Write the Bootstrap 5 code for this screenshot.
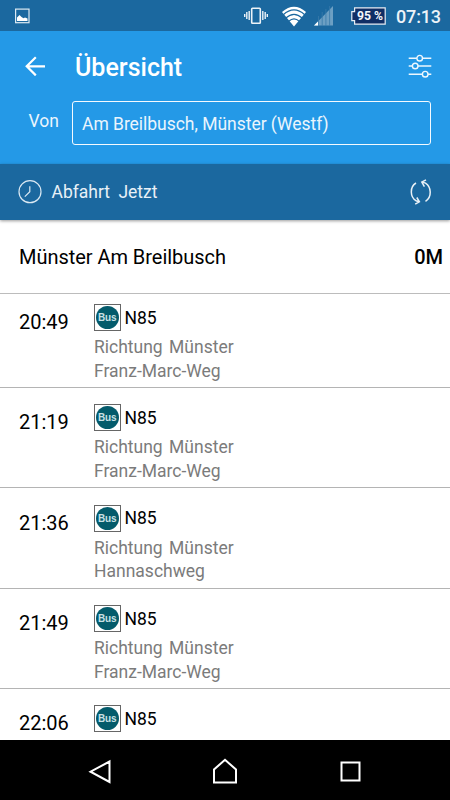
<!DOCTYPE html>
<html lang="de">
<head>
<meta charset="utf-8">
<meta name="viewport" content="width=device-width, initial-scale=1">
<title>Übersicht</title>
<link href="https://cdn.jsdelivr.net/npm/bootstrap@5.3.0/dist/css/bootstrap.min.css" rel="stylesheet">
<style>
body{font-family:Roboto,"Liberation Sans",sans-serif;color:#000;height:800px}
svg{display:block;flex:none}
.status{height:31px;background:#1b689f;padding:0 10px 0 14px}
.clock{font-size:18px;font-weight:500;line-height:31px;color:#edf3f8;width:44px;margin-left:10px;padding-top:1px;letter-spacing:-.15px}
.ic-wifi{margin-left:13px}
.ic-signal{margin-left:7px}
.ic-battery{margin-left:17px}
.appbar{height:133px;background:#2499e7}
.titlebar{height:70px;padding:0 18px 0 25px}
.title{font-size:25px;font-weight:500;line-height:30px;margin:3px 0 0 30px}
.from{padding:0 19px 0 28.5px}
.from-label{width:43.5px;font-size:17.5px;line-height:24px;padding-top:8px;color:#eaf5fd}
.from-field{height:44px;border:1px solid #f4faff;border-radius:3px;font-size:17.5px;line-height:44px;padding-left:9px;color:#eaf5fd;letter-spacing:-.03px}
.timebar{height:56px;background:#1b689f;padding:0 18px;color:#e9f1f7;font-size:17.5px;box-shadow:0 1px 3px rgba(0,0,0,.4);z-index:1}
.when{margin-left:9.5px;padding-top:1px;word-spacing:4px}
.stop{height:74px;font-size:20px;padding:0 7px 0 19px;border-bottom:1px solid #bcbcbc;letter-spacing:-.04px}
.trip{height:100.4px;padding:16.2px 0 0 19px;border-bottom:1px solid #b4b4b4}
.trip:first-child{height:94px;padding-top:10px}
.time{width:75px;font-size:20px;line-height:24px;padding-top:6px}
.line{font-size:17.5px;gap:4px;height:27px}
.line-no{padding-top:1px}
.bus-box{width:26.500px;height:27px;border:1px solid #666}
.bus-disc{width:23px;height:23px;border-radius:50%;background:#045b6b;color:#c9e0e4;font:700 10px/23px "Liberation Sans",sans-serif;text-align:center;white-space:nowrap;letter-spacing:-.1px}
.dest{font-size:17.5px;line-height:23.700px;color:#7b7b7b;padding-top:5px;word-spacing:2px}
.navkeys{height:60px;background:#000}
</style>
<script src="https://cdn.jsdelivr.net/npm/bootstrap@5.3.0/dist/js/bootstrap.bundle.min.js"></script>
</head>
<body class="d-flex flex-column overflow-hidden bg-white">
<div class="status d-flex align-items-center flex-shrink-0">
  <svg width="16" height="16" viewBox="0 0 16 16"><rect x="1.6" y="1.1" width="13.4" height="13.6" fill="none" stroke="#dce9f2" stroke-width="1.2"/><path d="M3 13V9.500L5.500 7l2 2 2 1.200 1.500-.7 2.500 1V13z" fill="#fff"/></svg>
  <svg class="ms-auto" width="24" height="20" viewBox="0 0 24 20" fill="none" stroke="#edf3f8" stroke-width="1.4"><rect x="7.7" y="2.2" width="8.600" height="15" rx=".8" stroke-width="1.600"/><path d="M5.200 5v9M2.800 6v7M.7 8v3M18.800 5v9M21.200 6v7M23.300 8v3"/></svg>
  <svg class="ic-wifi" width="26" height="22" viewBox="0 0 26 22"><path d="M1 7Q13-3.500 25 7L13 21.500z" fill="#fff"/><path d="M2.300 9.700Q13 0 23.700 9.700M4.800 13Q13 5.600 21.200 13M7.700 16.200Q13 11.500 18.300 16.200" fill="none" stroke="#1b689f" stroke-width="1.2"/></svg>
  <svg class="ic-signal" width="20" height="20" viewBox="0 0 20 20"><path d="M0 19.500L19 0V19.500z" fill="#6c9fc3"/><path d="M0 19.500l4-4.100v4.100z" fill="#fff"/><path d="M4.500 10v10M8.200 6v14M11.900 3v17M15.600 0v20" stroke="#397aa9" stroke-width=".8"/></svg>
  <svg class="ic-battery" width="35" height="18" viewBox="0 0 35 18"><path d="M3.600.8h30.600v16.400H3.600v-3.600H.8V4.700h2.800z" fill="#102e65" stroke="#e7eef5" stroke-width="1.200"/><text x="6" y="13" textLength="26" lengthAdjust="spacingAndGlyphs" font-family="Roboto, sans-serif" font-size="12.3" font-weight="700" fill="#f3f7fb">95 %</text></svg>
  <div class="clock">07:13</div>
</div>
<header class="appbar flex-shrink-0 text-white">
  <div class="titlebar d-flex align-items-center">
    <svg width="20" height="20" viewBox="0 0 20 20" fill="none" stroke="#fff" stroke-width="2.2"><path d="M20 10.300H2M10.800 1.200L1.700 10.300l9.100 9.100"/></svg>
    <h1 class="title mb-0">Übersicht</h1>
    <svg class="ms-auto" width="24" height="24" viewBox="0 0 24 24" fill="#2499e7" stroke="#edf7fe" stroke-width="1.4"><path d="M.7 4.200h22.600M.7 12h22.600M.7 20.200h22.600"/><circle cx="11.700" cy="4.200" r="2.800"/><circle cx="7.200" cy="12" r="2.800"/><circle cx="17.200" cy="20.200" r="2.800"/></svg>
  </div>
  <div class="from d-flex">
    <div class="from-label flex-shrink-0">Von</div>
    <div class="from-field flex-grow-1">Am Breilbusch, Münster (Westf)</div>
  </div>
</header>
<div class="timebar d-flex align-items-center flex-shrink-0 position-relative">
  <svg width="24" height="24" viewBox="0 0 24 24" fill="none" stroke="#dbe9f3" stroke-width="1.2"><circle cx="12" cy="11.700" r="11"/><path d="M11.800 6.200v5.500l-5 5"/></svg>
  <span class="when">Abfahrt Jetzt</span>
  <svg class="ms-auto" width="22" height="26" viewBox="0 0 22 26" fill="none" stroke="#e9f1f7" stroke-width="1.500"><path d="M6 4C-.6 8 .1 18 6 21.700l3 1.100M5.200 25.200l4.200-2.400-2.600-4.300M15.500 22.300c6.600-4 6-14.500 0-18.200l-3-1M16 .8l-4.200 2.300L14.400 7.600"/></svg>
</div>
<main class="flex-grow-1 overflow-hidden">
  <div class="stop d-flex align-items-center justify-content-between"><span>Münster Am Breilbusch</span><span class="fw-medium om">0M</span></div>
  <div>
    <div class="trip d-flex"><div class="time">20:49</div><div><div class="line d-flex align-items-center"><div class="bus-box d-flex align-items-center justify-content-center"><span class="bus-disc">Bus</span></div><span class="line-no">N85</span></div><div class="dest">Richtung Münster<br>Franz-Marc-Weg</div></div></div>
    <div class="trip d-flex"><div class="time">21:19</div><div><div class="line d-flex align-items-center"><div class="bus-box d-flex align-items-center justify-content-center"><span class="bus-disc">Bus</span></div><span class="line-no">N85</span></div><div class="dest">Richtung Münster<br>Franz-Marc-Weg</div></div></div>
    <div class="trip d-flex"><div class="time">21:36</div><div><div class="line d-flex align-items-center"><div class="bus-box d-flex align-items-center justify-content-center"><span class="bus-disc">Bus</span></div><span class="line-no">N85</span></div><div class="dest">Richtung Münster<br>Hannaschweg</div></div></div>
    <div class="trip d-flex"><div class="time">21:49</div><div><div class="line d-flex align-items-center"><div class="bus-box d-flex align-items-center justify-content-center"><span class="bus-disc">Bus</span></div><span class="line-no">N85</span></div><div class="dest">Richtung Münster<br>Franz-Marc-Weg</div></div></div>
    <div class="trip d-flex"><div class="time">22:06</div><div><div class="line d-flex align-items-center"><div class="bus-box d-flex align-items-center justify-content-center"><span class="bus-disc">Bus</span></div><span class="line-no">N85</span></div></div></div>
  </div>
</main>
<nav class="navkeys d-flex justify-content-center align-items-center flex-shrink-0">
  <svg width="274" height="28" viewBox="0 0 274 28" fill="none" stroke="#fff" stroke-width="2"><path d="M21.500 5.500v20.500L2.500 15.700zM126 26.500V13.500l11-9.700 11 9.700V26.500zM253.500 6.500h18v18h-18z"/></svg>
</nav>
</body>
</html>
